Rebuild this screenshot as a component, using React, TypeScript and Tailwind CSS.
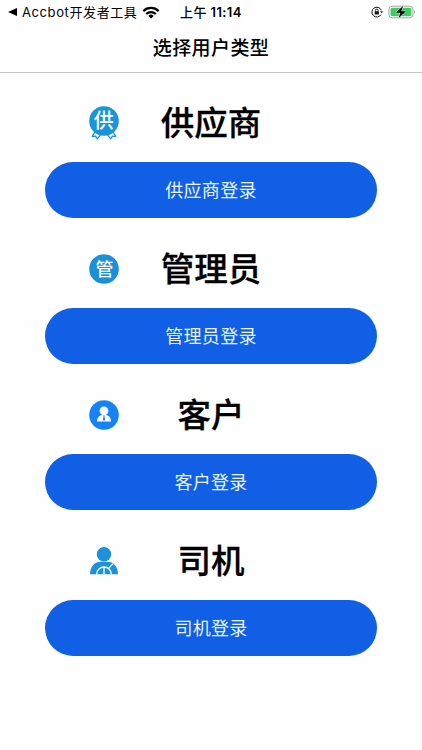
import type { ReactNode } from 'react';

type UserType = {
  id: string;
  name: string;
  icon: ReactNode;
};

function SupplierIcon() {
  return (
    <svg viewBox="0 0 32 36" className="h-9 w-8">
      <path
        d="M7.6 26 4.2 31.4l3.4-.3 1.7 2.8 3.6-4.6M24.4 26l3.4 5.4-3.4-.3-1.7 2.8-3.6-4.6"
        fill="#fff"
        stroke="#1a94d8"
        strokeWidth="1.2"
        strokeLinejoin="round"
      />
      <circle cx="16" cy="16" r="14.8" fill="#1a94d8" />
      <text x="15.7" y="23" textAnchor="middle" fontSize="20" fontWeight="500" fill="#fff">
        供
      </text>
    </svg>
  );
}

function AdminIcon() {
  return (
    <svg viewBox="0 0 32 36" className="h-9 w-8">
      <circle cx="16" cy="18" r="14.8" fill="#1a90d8" />
      <text x="16.4" y="24.6" textAnchor="middle" fontSize="18" fontWeight="500" fill="#fff">
        管
      </text>
    </svg>
  );
}

function CustomerIcon() {
  return (
    <svg viewBox="0 0 32 36" className="h-9 w-8">
      <circle cx="16" cy="18" r="14.8" fill="#1683f5" />
      <circle cx="16" cy="13.8" r="4.4" fill="#fff" />
      <path d="M9 24.6c0-4 2.2-6 5-6.6h4c2.8.6 5 2.6 5 6.6Z" fill="#fff" />
      <path d="M15.2 18.6h1.6l-.3 1.2.7 2.8-1.2 1.4-1.2-1.4.7-2.8Z" fill="#1683f5" />
    </svg>
  );
}

function DriverIcon() {
  return (
    <svg viewBox="0 0 32 36" className="h-9 w-8">
      <circle cx="16" cy="11.3" r="7.2" fill="#1c93d9" />
      <path d="M2 31.3C2 23 7 18.7 12.5 18.7h7C25 18.7 30 23 30 31.3Z" fill="#1c93d9" />
      <g fill="none" stroke="#fff" strokeWidth="1.4">
        <path d="M8.6 31.4a7.4 7.4 0 0 1 14.8 0" />
        <path d="M16 24v7.4M20.6 25.4l4.4-4.8" />
      </g>
    </svg>
  );
}

const USER_TYPES: UserType[] = [
  { id: 'supplier', name: '供应商', icon: <SupplierIcon /> },
  { id: 'admin', name: '管理员', icon: <AdminIcon /> },
  { id: 'customer', name: '客户', icon: <CustomerIcon /> },
  { id: 'driver', name: '司机', icon: <DriverIcon /> },
];

function WifiIcon() {
  return (
    <svg viewBox="0 0 18 13" className="h-[13px] w-[18px]" fill="none" stroke="#000" strokeWidth="2.2">
      <path d="M1.3 5.1a11 11 0 0 1 15.4 0" />
      <path d="M4.2 8a7 7 0 0 1 9.6 0" />
      <path d="M9 12.6 6.3 9.9a3.9 3.9 0 0 1 5.4 0Z" fill="#000" stroke="none" />
    </svg>
  );
}

function RotationLockIcon() {
  return (
    <svg viewBox="0 0 12 12" className="size-3" fill="none" stroke="#111">
      <path d="M10 8.6A4.9 4.9 0 1 1 10.3 4.2" strokeWidth="1" />
      <path d="M9.1 5.2h2.9l-1.4 2.1Z" fill="#111" stroke="none" />
      <path d="M4.4 5.5v-1a1.4 1.4 0 0 1 2.8 0v1" strokeWidth=".9" />
      <rect x="3.7" y="5.3" width="4.2" height="3.2" rx=".5" fill="#111" stroke="none" />
    </svg>
  );
}

function BatteryIcon() {
  return (
    <svg viewBox="0 0 28 14" className="h-3.5 w-7">
      <rect x=".9" y="1.2" width="24" height="11.6" rx="3.2" fill="#fff" stroke="#a3a3a3" />
      <rect x="2.5" y="2.8" width="20.8" height="8.4" rx="1.8" fill="#3ecb62" />
      <path d="M26 5.3c1.5.5 1.5 2.9 0 3.4Z" fill="#a3a3a3" />
      <path d="M15.2.8 7.8 7.7h4.6l-1.9 5.6 7.5-7h-4.7Z" fill="#000" stroke="#fff" strokeWidth=".9" paintOrder="stroke" />
    </svg>
  );
}

function StatusBar() {
  return (
    <div className="flex h-6 items-center pl-2 pr-[6px] text-[13px] leading-6 text-black">
      <svg viewBox="0 0 9 8" className="h-2 w-[9px]">
        <path d="M9 0v8L0 4Z" />
      </svg>
      <span className="ml-[5px] w-[115px] whitespace-nowrap tracking-[0.6px]">Accbot开发者工具</span>
      <span className="ml-[5px]">
        <WifiIcon />
      </span>
      <span className="ml-5 whitespace-nowrap font-semibold tracking-[0.4px]">
        <span className="font-medium">上午</span> 11:14
      </span>
      <div className="ml-auto flex items-center gap-[5px]">
        <RotationLockIcon />
        <BatteryIcon />
      </div>
    </div>
  );
}

function UserTypeSection({ name, icon }: Omit<UserType, 'id'>) {
  return (
    <section className="h-[146px]">
      <div className="mb-1 grid h-[70px] grid-cols-[118px_96px_118px] items-center">
        <div className="flex justify-center">{icon}</div>
        <h2 className="flex justify-center whitespace-nowrap text-[33.5px] font-medium leading-[48px] text-black [-webkit-text-stroke:0.3px_#000]">
          {name}
        </h2>
      </div>
      <button
        type="button"
        className="h-14 w-full rounded-full bg-[#105fe5] pt-0.5 text-lg tracking-[0.3px] text-[#e9f3ff]"
      >
        {name}登录
      </button>
    </section>
  );
}

export default function App() {
  return (
    <div className="min-h-[750px] w-full bg-[#fefefe] font-[Inter,'Noto_Sans_CJK_SC',sans-serif]">
      <StatusBar />
      <header className="flex h-[49px] items-center justify-center border-b border-[#c8c8c8] pt-0.5">
        <h1 className="text-[19px] font-medium tracking-[0.4px] text-black">选择用户类型</h1>
      </header>
      <main className="px-[45px] pt-[15px]">
        {USER_TYPES.map((type) => (
          <UserTypeSection key={type.id} name={type.name} icon={type.icon} />
        ))}
      </main>
    </div>
  );
}
